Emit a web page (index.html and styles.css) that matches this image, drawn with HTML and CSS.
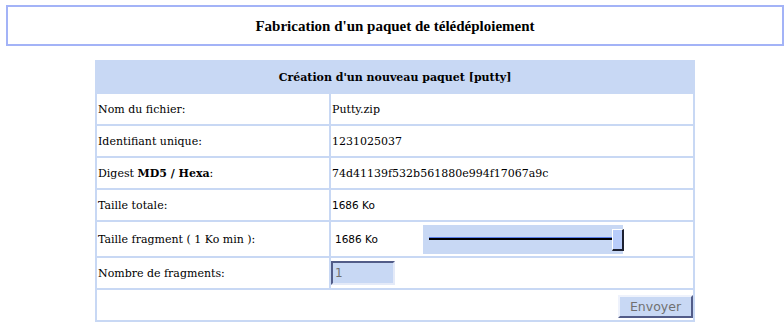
FILE: index.html
```html
<!DOCTYPE html>
<html lang="fr">
  <head>
    <meta charset="UTF-8" />
    <title>Fabrication d'un paquet</title>
    <link rel="stylesheet" href="styles.css">
  </head>
  <body>
    <div class="title-box">Fabrication d'un paquet de télédéploiement</div>

    <form class="pkg">
      <table class="pkg-table">
        <tr>
          <th colspan="2">Création d'un nouveau paquet [putty]</th>
        </tr>
        <tr>
          <td class="lbl">Nom du fichier:</td>
          <td>Putty.zip</td>
        </tr>
        <tr>
          <td class="lbl">Identifiant unique:</td>
          <td>1231025037</td>
        </tr>
        <tr>
          <td class="lbl">Digest <b>MD5 / Hexa</b>:</td>
          <td>74d41139f532b561880e994f17067a9c</td>
        </tr>
        <tr>
          <td class="lbl">Taille totale:</td>
          <td class="sans">1686 Ko</td>
        </tr>
        <tr class="tall">
          <td class="lbl">Taille fragment ( 1 Ko min ):</td>
          <td>
            <div class="frag">
              <span class="frag-val sans">1686 Ko</span>
              <div class="slider">
                <div class="track"></div>
                <div class="thumb"></div>
              </div>
            </div>
          </td>
        </tr>
        <tr>
          <td class="lbl">Nombre de fragments:</td>
          <td class="nopad"><input class="num" type="text" value="1" /></td>
        </tr>
        <tr>
          <td colspan="2" class="actions"><button type="button" class="btn">Envoyer</button></td>
        </tr>
      </table>
    </form>
  </body>
</html>
```

FILE: styles.css
```css
* {
  margin: 0;
  padding: 0;
}
body {
  padding: 5px 0 0 6px;
  font-family: "DejaVu Serif", serif;
  font-size: 11px;
  color: #000;
  background-color: #fff;
}
.title-box {
  width: 774px;
  height: 36px;
  border: 2px solid #a3b3f7;
  display: flex;
  align-items: center;
  justify-content: center;
  font-family: "Liberation Serif", serif;
  font-size: 15px;
  font-weight: bold;
  padding-top: 1px;
}
.pkg {
  margin: 14px 0 0 89px;
}
.pkg-table {
  width: 600px;
  border-spacing: 2px;
  background-color: #c8d8f4;
}
.pkg-table th {
  height: 30px;
  font-weight: bold;
  text-align: center;
}
.pkg-table td {
  height: 30px;
  padding: 0 0 0 1px;
  background-color: #fff;
  vertical-align: middle;
}
.pkg-table td.lbl {
  width: 231px;
}
.pkg-table td.nopad {
  padding: 0;
}
.pkg-table tr.tall td {
  height: 34px;
}
.sans {
  font-family: "DejaVu Sans", sans-serif;
  font-size: 10.5px;
}
.frag {
  display: flex;
  align-items: center;
  padding-left: 3px;
}
.frag-val {
  width: 88px;
}
.slider {
  width: 200px;
  height: 29px;
  background-color: #c8d8f4;
  position: relative;
  margin-top: 1px;
}
.track {
  position: absolute;
  left: 6px;
  top: 12px;
  width: 184px;
  height: 1px;
  border-top: 1px solid #5a7ee8;
  border-bottom: 1px solid #000;
  background-color: #000;
}
.thumb {
  position: absolute;
  left: 189px;
  top: 4px;
  width: 9px;
  height: 19px;
  background-color: #b8ccfa;
  border-top: 1px solid #fff;
  border-left: 1px solid #fff;
  border-right: 2px solid #1c2030;
  border-bottom: 2px solid #1c2030;
}
.num {
  display: block;
  width: 58px;
  height: 20px;
  padding-left: 2px;
  background-color: #c8d8f4;
  border-top: 2px solid #525c88;
  border-left: 2px solid #525c88;
  border-right: 2px solid #e4eaf8;
  border-bottom: 2px solid #e4eaf8;
  font-family: "DejaVu Sans", sans-serif;
  font-size: 12px;
  color: #707070;
  outline: none;
}
.actions {
  text-align: right;
}
.pkg-table td.actions {
  padding: 0;
}
.btn {
  width: 75px;
  height: 23px;
  margin-top: 3px;
  background-color: #c8d8f4;
  border-top: 2px solid #eef2fc;
  border-left: 2px solid #eef2fc;
  border-right: 2px solid #525c88;
  border-bottom: 2px solid #525c88;
  font-family: "DejaVu Sans", sans-serif;
  font-size: 12.5px;
  color: #707070;
  vertical-align: top;
}
```
